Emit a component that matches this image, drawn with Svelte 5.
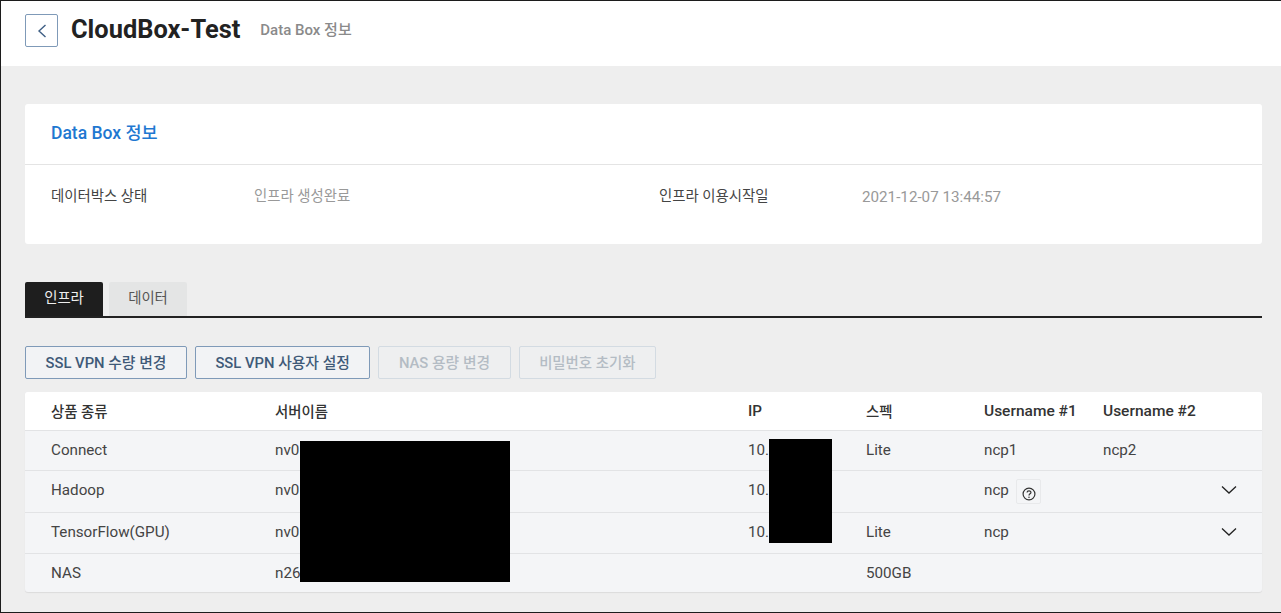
<script>
  const rows = [
    { type: 'Connect', server: 'nv0', ip: '10.', spec: 'Lite', user1: 'ncp1', user2: 'ncp2' },
    { type: 'Hadoop', server: 'nv0', ip: '10.', spec: '', user1: 'ncp', help: true, open: true },
    { type: 'TensorFlow(GPU)', server: 'nv0', ip: '10.', spec: 'Lite', user1: 'ncp', open: true },
    { type: 'NAS', server: 'n26', ip: '', spec: '500GB', user1: '' }
  ];
  const actions = [
    { label: 'SSL VPN 수량 변경', disabled: false },
    { label: 'SSL VPN 사용자 설정', disabled: false },
    { label: 'NAS 용량 변경', disabled: true },
    { label: '비밀번호 초기화', disabled: true, ko: true }
  ];
</script>

<div class="page">
  <header class="top">
    <button class="back" aria-label="뒤로">
      <svg width="10" height="16" viewBox="0 0 10 16"><path d="M8.5 2 L2 8 L8.5 14" fill="none" stroke="#3f5f85" stroke-width="1.4" /></svg>
    </button>
    <h1>CloudBox-Test</h1>
    <span class="crumb">Data Box 정보</span>
  </header>

  <main>
    <section class="card">
      <h2>Data Box 정보</h2>
      <div class="info">
        <span class="key ko">데이터박스 상태</span>
        <span class="val ko">인프라 생성완료</span>
        <span class="key ko">인프라 이용시작일</span>
        <span class="val">2021-12-07 13:44:57</span>
      </div>
    </section>

    <nav class="tabs">
      <div class="tab active ko">인프라</div>
      <div class="tab ko">데이터</div>
    </nav>

    <div class="actions">
      {#each actions as a}
        <button class="act" class:disabled={a.disabled} class:short={a.ko}>{a.label}</button>
      {/each}
    </div>

    <div class="table-wrap">
      <div class="row head">
        <div class="ko">상품 종류</div><div class="ko">서버이름</div><div>IP</div><div class="ko">스펙</div><div class="name">Username #1</div><div class="name">Username #2</div><div></div>
      </div>
      {#each rows as r}
        <div class="row">
          <div>{r.type}</div>
          <div>{r.server}</div>
          <div>{r.ip}</div>
          <div>{r.spec}</div>
          <div class="user">
            {r.user1}
            {#if r.help}
              <span class="help">
                <svg width="14" height="14" viewBox="0 0 13 13">
                  <circle cx="6.5" cy="6.5" r="5.5" fill="none" stroke="#333" stroke-width="1.1" />
                  <path d="M4.7 5.2 C4.7 3 8.3 3 8.3 5.1 C8.3 6.3 6.5 6.3 6.5 7.8" fill="none" stroke="#333" stroke-width="1.1" />
                  <circle cx="6.5" cy="9.5" r="0.7" fill="#333" />
                </svg>
              </span>
            {/if}
          </div>
          <div>{r.user2 ?? ''}</div>
          <div class="chev">
            {#if r.open}
              <svg width="16" height="10" viewBox="0 0 16 10"><path d="M1 1.5 L8 8 L15 1.5" fill="none" stroke="#222" stroke-width="1.3" /></svg>
            {/if}
          </div>
        </div>
      {/each}
      <div class="mask mask-server"></div>
      <div class="mask mask-ip"></div>
    </div>
  </main>
</div>

<style>
  :global(body) {
    margin: 0;
    background: #eee;
  }

  .page {
    position: relative;
    box-sizing: border-box;
    width: 1281px;
    height: 613px;
    overflow: hidden;
    border: solid #1c1c1c;
    border-width: 1px 0 1px 1px;
    background: #eeeeee;
    font-family: Roboto, "Noto Sans CJK KR", sans-serif;
    font-size: 15.2px;
    color: #444;
  }

  .ko {
    font-size: 14.4px;
  }

  .top {
    display: flex;
    align-items: center;
    height: 65px;
    padding: 0 0 6px 24px;
    box-sizing: border-box;
    background: #fff;
  }

  .back {
    display: flex;
    align-items: center;
    justify-content: center;
    box-sizing: border-box;
    width: 33px;
    height: 33px;
    padding: 0;
    background: #fff;
    border: 1px solid #7f9ab8;
    border-radius: 2px;
  }

  h1 {
    margin: -3px 0 0 13px;
    font-size: 25.4px;
    font-weight: 700;
    line-height: 32px;
    color: #222;
  }

  .crumb {
    margin: -5px 0 0 20px;
    font-size: 15px;
    font-weight: 500;
    color: #8a8a8a;
  }

  main {
    padding: 38px 19px 0 24px;
  }

  .card {
    height: 140px;
    background: #fff;
    border-radius: 3px;
  }

  h2 {
    box-sizing: border-box;
    height: 61px;
    margin: 0;
    padding: 0 26px;
    font-size: 17.5px;
    font-weight: 500;
    line-height: 59px;
    color: #1f78d1;
    border-bottom: 1px solid #e4e4e4;
  }

  .info {
    display: grid;
    grid-template-columns: 203px 405px 203px 1fr;
    align-items: center;
    padding: 22px 26px 0;
    line-height: 20px;
  }

  .key {
    color: #444;
  }

  .val {
    color: #999;
  }

  .tabs {
    display: flex;
    gap: 6px;
    height: 34px;
    margin-top: 38px;
    border-bottom: 2px solid #222;
  }

  .tab {
    width: 78px;
    line-height: 34px;
    text-align: center;
    background: #e4e5e5;
    color: #555;
    border-radius: 2px 2px 0 0;
  }

  .tab.active {
    background: #1e1e1e;
    color: #eee;
  }

  .actions {
    display: flex;
    gap: 8px;
    margin-top: 28px;
  }

  .act {
    box-sizing: border-box;
    height: 33px;
    padding: 0 19.5px 3px;
    font: inherit;
    font-size: 14.8px;
    font-weight: 500;
    color: #3f5a78;
    background: #f2f3f5;
    border: 1px solid #7f9ab8;
    border-radius: 2px;
  }

  .act.disabled {
    color: #b4bcc4;
    background: #eeeff0;
    border-color: #d3dbe2;
  }

  .act.short {
    font-size: 14.4px;
  }

  .table-wrap {
    position: relative;
    margin-top: 13px;
    background: #f4f5f7;
    border-radius: 3px;
    box-shadow: 0 1px 1px rgba(0, 0, 0, 0.08);
  }

  .row {
    display: grid;
    grid-template-columns: 224px 473px 118px 118px 119px 1fr 41px;
    align-items: center;
    height: 40px;
    padding-left: 26px;
    padding-bottom: 1px;
    border-bottom: 1px solid #e2e3e5;
    box-sizing: border-box;
  }

  .row:nth-child(3) {
    height: 42px;
    padding-bottom: 3px;
  }

  .row:nth-child(4) {
    height: 41px;
    padding-bottom: 2px;
  }

  .row:nth-child(5) {
    height: 38px;
    padding-bottom: 0;
    border-bottom: 0;
  }

  .head {
    height: 39px;
    background: #fff;
    font-weight: 500;
    color: #333;
    border-radius: 3px 3px 0 0;
  }

  .name {
    font-size: 15.5px;
  }

  .user {
    display: flex;
    align-items: center;
    gap: 7px;
  }

  .help {
    display: flex;
    align-items: center;
    justify-content: center;
    box-sizing: border-box;
    width: 25px;
    height: 25px;
    margin-top: 2px;
    padding-top: 6px;
    padding-left: 1px;
    border: 1px solid #e8e9eb;
    border-radius: 2px;
  }

  .chev {
    display: flex;
    align-items: center;
  }

  .mask {
    position: absolute;
    background: #000;
  }

  .mask-server {
    left: 275px;
    top: 49px;
    width: 210px;
    height: 141px;
  }

  .mask-ip {
    left: 744px;
    top: 47px;
    width: 63px;
    height: 104px;
  }
</style>
